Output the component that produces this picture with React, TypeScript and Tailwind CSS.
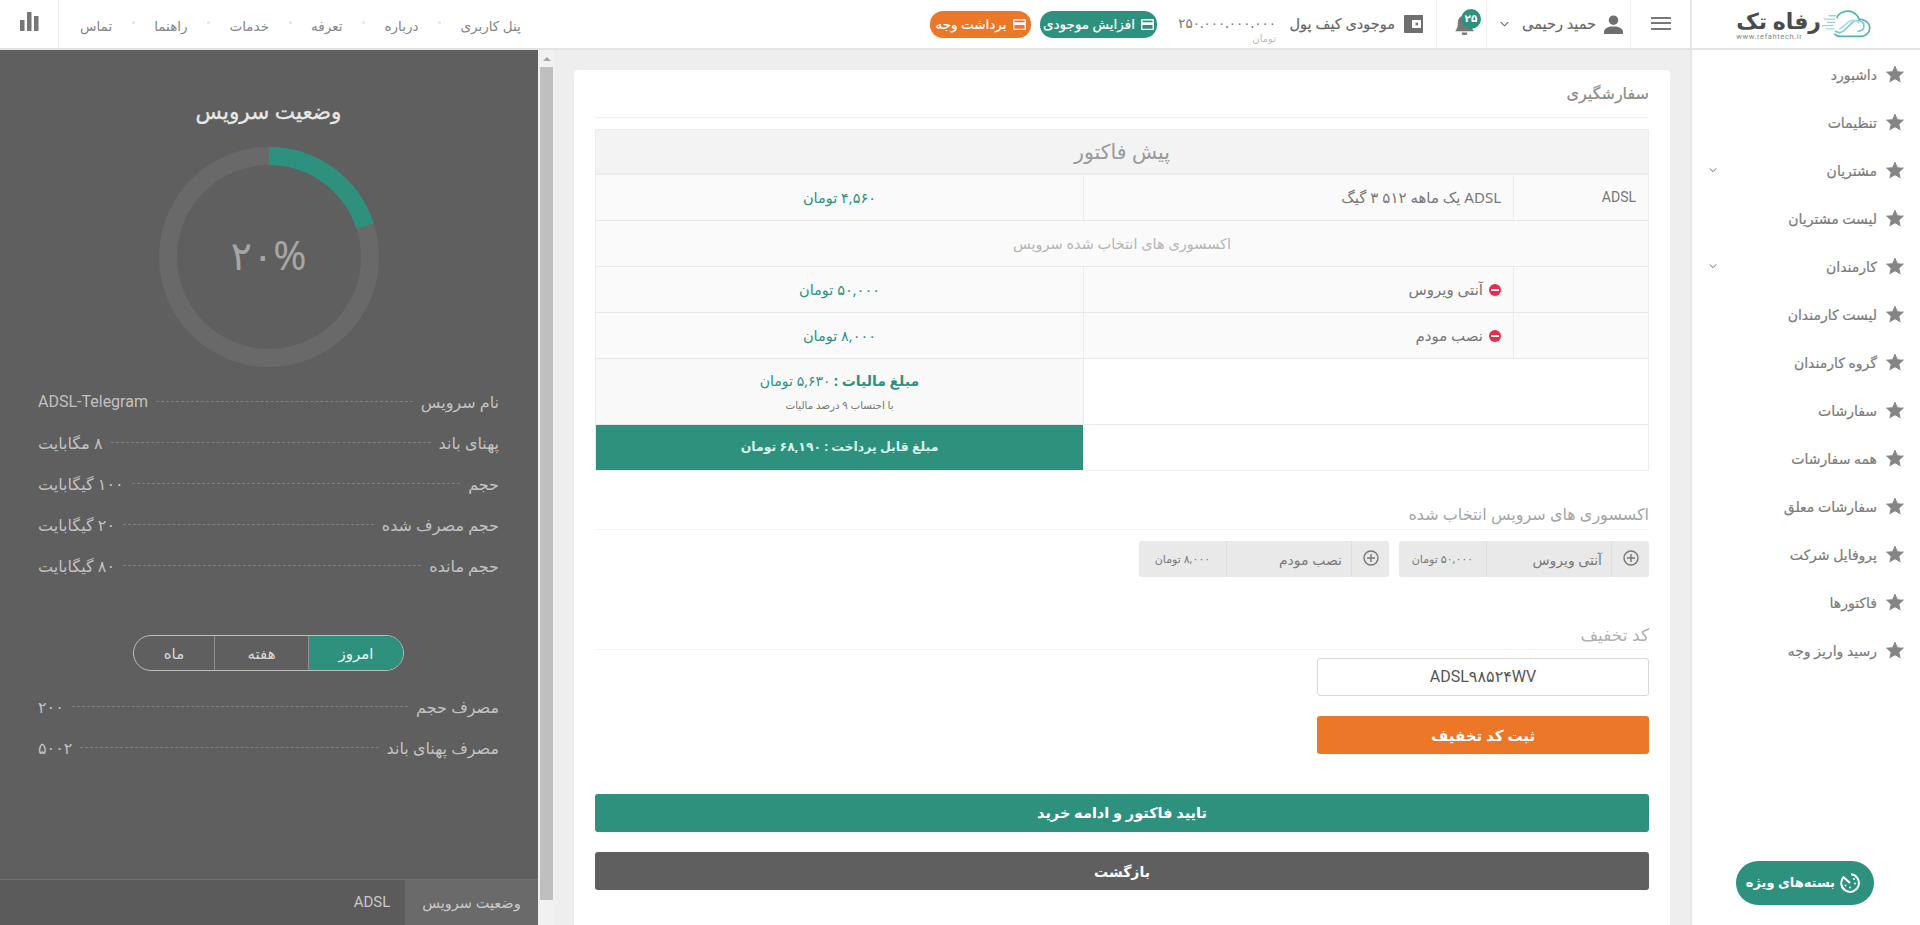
import React from "react";

const Star = () => (
  <svg viewBox="0 0 24 24" className="w-[20px] h-[20px] shrink-0 fill-[#858585]">
    <path d="M12 1.500l3.200 7.100 7.800.8-5.800 5.200 1.700 7.600L12 18.300l-6.900 3.900 1.700-7.600L1 9.400l7.800-.8z" />
  </svg>
);
const Chevron = ({ cls }: { cls: string }) => (
  <svg viewBox="0 0 12 8" className={cls} fill="none" stroke="#666" strokeWidth="1.400">
    <path d="M1 1.500l5 5 5-5" />
  </svg>
);
const Card = () => (
  <svg viewBox="0 0 14 12" className="w-[13px] h-[11px] shrink-0">
    <path fillRule="evenodd" fill="#fff" d="M1 0h12a1 1 0 0 1 1 1v10a1 1 0 0 1-1 1H1a1 1 0 0 1-1-1V1a1 1 0 0 1 1-1zM1.500 1.500v2h11v-2zM1.500 6.500v4h11v-4z" />
  </svg>
);

const Sidebar = () => {
  const items: [string, boolean?][] = [
    ["داشبورد"], ["تنظیمات"], ["مشتریان", true], ["لیست مشتریان"], ["کارمندان", true], ["لیست کارمندان"],
    ["گروه کارمندان"], ["سفارشات"], ["همه سفارشات"], ["سفارشات معلق"], ["پروفایل شرکت"], ["فاکتورها"], ["رسید واریز وجه"],
  ];
  return (
    <aside className="w-[230px] shrink-0 bg-white border-l-2 border-[#e6e6e6] flex flex-col">
      <nav className="flex flex-col">
        {items.map(([t, c]) => (
          <div key={t} className="h-[48px] flex items-center pr-[15px] pl-[17px] text-[14px] text-[#7b7b7b]">
            <Star />
            <span className="mr-[8px] [-webkit-text-stroke:0.2px_#7b7b7b]">{t}</span>
            {c && <Chevron cls="w-[8px] h-[6px] mr-auto" />}
          </div>
        ))}
      </nav>
      <div className="mt-auto mb-[20px] mr-[46px] self-start w-[138px] h-[44px] rounded-[22px] bg-[#2d917d] flex items-center pr-[14px] gap-[5px] text-white text-[13px] font-bold">
        <svg viewBox="0 0 20 20" className="w-[20px] h-[20px] shrink-0" fill="none" stroke="#fff" strokeWidth="2">
          <path d="M11 1.300A8.800 8.800 0 1 1 3.500 4.200L10 10" />
          <path d="M14 6v.1M15 10.500v.1M10 14.500v.1M5.500 12.500v.1" strokeLinecap="round" />
        </svg>
        <span className="whitespace-nowrap">بسته‌های ویژه</span>
      </div>
    </aside>
  );
};

const Logo = () => (
  <div className="w-[230px] shrink-0 h-full border-l-2 border-[#e6e6e6] flex items-center pr-[47px]">
    <svg viewBox="0 0 62 38" className="w-[51px] h-[32px] shrink-0" fill="none" strokeWidth="2">
      <path d="M16 27c4 4 8 3 12-1l8-8c5-6 15-3 15 4 0 3-3 6-8 6" stroke="#7cc9cf" />
      <path d="M18 12c2-7 12-11 20-7 4 2 6 5 7 8 6 0 13 4 13 11 0 6-5 10-11 10H22c-3 0-5-1-7-3" stroke="#53b3ad" />
      <path d="M21 25c4-1 7-6 12-9 5-3 10-1 12 2" stroke="#a8dfe3" />
      <path d="M2 13h14M6 17h10M0 21h14M5 25h10M8 9h9" stroke="#9ad7d4" strokeWidth="1.600" />
    </svg>
    <div className="flex flex-col items-end mr-[1px] mt-[1px]">
      <span className="text-[22px] leading-[25px] font-bold text-[#4b4b4b] whitespace-nowrap">رفاه تک</span>
      <span dir="ltr" className="text-[7.500px] leading-[8px] tracking-[0.600px] text-[#888] font-['Roboto',sans-serif]">www.refahtech.ir</span>
    </div>
  </div>
);

const Header = () => (
  <header className="h-[50px] shrink-0 flex bg-white border-b-2 border-[#e4e4e4] text-[#6a6a6a]">
    <Logo />
    <div className="w-[60px] shrink-0 flex items-center justify-center border-l border-[#f0f0f0]">
      <div className="w-[20px] flex flex-col gap-[3.500px] mb-[2px]">
        <div className="h-[2px] bg-[#777]" /><div className="h-[2px] bg-[#777]" /><div className="h-[2px] bg-[#777]" />
      </div>
    </div>
    <div className="w-[144px] shrink-0 flex items-center border-l border-[#f0f0f0] pr-[7px]">
      <svg viewBox="0 0 20 20" className="w-[19px] h-[19px] shrink-0 fill-[#6e6e6e]">
        <circle cx="10" cy="5.500" r="5" /><path d="M0 20v-2c0-4 4-6 10-6s10 2 10 6v2z" />
      </svg>
      <span className="mr-[8px] w-[75px] text-[14.500px] text-[#666] whitespace-nowrap [-webkit-text-stroke:0.2px_#666]">حمید رحیمی</span>
      <Chevron cls="w-[9px] h-[6px] mr-[12px]" />
    </div>
    <div className="w-[50px] shrink-0 flex items-center justify-center border-l border-[#f0f0f0] relative">
      <svg viewBox="0 0 20 22" className="w-[19px] h-[21px] mt-[1px] ml-[6px] fill-[#777]">
        <path d="M10 0a2 2 0 0 1 2 2c4 1 5 4 5 8 0 4 1 6 3 8H0c2-2 3-4 3-8 0-4 1-7 5-8a2 2 0 0 1 2-2zM7 19.500h6a3 3 0 0 1-6 0z" />
      </svg>
      <span className="absolute top-[9px] left-[24px] w-[20px] h-[20px] rounded-full bg-[#2d917d] text-white text-[10.500px] font-bold flex items-center justify-center">۲۵</span>
    </div>
    <div className="flex items-center pr-[13px] shrink-0">
      <svg viewBox="0 0 19 18" className="w-[19px] h-[18px] shrink-0">
        <path fill="#6f6f6f" fillRule="evenodd" d="M1 0h18v18H1a1 1 0 0 1-1-1V1a1 1 0 0 1 1-1zM8 5v8h9V5zM11.500 7.700h2.500v2.500h-2.500z" />
      </svg>
      <span className="mr-[9px] w-[107px] text-[14.500px] text-[#666] whitespace-nowrap [-webkit-text-stroke:0.2px_#666]">موجودی کیف پول</span>
      <div className="mr-[12px] w-[99px] flex flex-col pt-[9px]">
        <span className="text-[13.500px] leading-[18px] text-right whitespace-nowrap text-[#777]">۲۵۰.۰۰۰.۰۰۰.۰۰۰</span>
        <span className="text-[10px] leading-[12px] text-[#bbb]">تومان</span>
      </div>
      <div className="mr-[20px] w-[117px] h-[27px] rounded-[13px] bg-[#2d917d] text-white flex items-center justify-center gap-[6px] text-[13.500px] whitespace-nowrap [-webkit-text-stroke:0.2px_#fff]">
        <Card /><span>افزایش موجودی</span>
      </div>
      <div className="mr-[9px] w-[101px] h-[27px] rounded-[13px] bg-[#ec7728] text-white flex items-center justify-center gap-[6px] text-[13.500px] whitespace-nowrap [-webkit-text-stroke:0.2px_#fff]">
        <Card /><span>برداشت وجه</span>
      </div>
    </div>
    <nav className="flex-1 flex items-center justify-end text-[13.500px] text-[#858585] pl-[21px]">
      {["پنل کاربری", "درباره", "تعرفه", "خدمات", "راهنما", "تماس"].map((t, i) => (
        <div key={t} className="flex items-center mt-[5px]">
          {i > 0 && <span className="w-[3px] h-[3px] mx-[19.500px] mb-[9px] rounded-full bg-[#e6e6e6]" />}
          <span className="whitespace-nowrap">{t}</span>
        </div>
      ))}
    </nav>
    <div className="w-[59px] shrink-0 flex items-center justify-center border-r border-[#f0f0f0]">
      <svg viewBox="0 0 19 19" className="w-[19px] h-[19px] mb-[5px] fill-[#777]">
        <rect x="14" y="4" width="4.500" height="15" /><rect x="7" y="0" width="4.500" height="19" /><rect x="0" y="8" width="4.500" height="11" />
      </svg>
    </div>
  </header>
);

const Td = ({ cls, children }: { cls: string; children?: React.ReactNode }) => (
  <div className={"flex items-center border-l border-[#ececec] " + cls}>{children}</div>
);
const Minus = () => (
  <span className="w-[12px] h-[12px] rounded-full bg-[#ee2a4a] flex items-center justify-center shrink-0">
    <span className="w-[8px] h-[2px] bg-white" />
  </span>
);

const TableRow = ({ a, b, minus, ltr }: { a: string; b: string; minus?: boolean; ltr?: string }) => (
  <div className="h-[46px] flex border-b border-[#e9e9e9] bg-[#fafafa]">
    <Td cls="w-[135px] shrink-0 pr-[12px] text-[#777]"><span className="font-['Roboto',sans-serif] text-[14px]">{ltr}</span></Td>
    <Td cls="w-[430px] shrink-0 pr-[12px] text-[#777] gap-[6px] text-[15px]">{minus && <Minus />}<span>{b}</span></Td>
    <div className="flex-1 flex items-center justify-center text-[#2d917d] text-[14.500px]">{a}</div>
  </div>
);

const Chip = ({ n, p }: { n: string; p: string }) => (
  <div className="w-[250px] h-[36px] flex rounded-[3px] bg-[#e9e9e9] text-[#7a7a7a]">
    <div className="w-[38px] shrink-0 border-l border-[#dedede] flex items-center justify-center">
      <svg viewBox="0 0 16 16" className="w-[16px] h-[16px] mb-[2px]" fill="none" stroke="#777" strokeWidth="1.400">
        <circle cx="8" cy="8" r="7" /><path d="M8 4v8M4 8h8" />
      </svg>
    </div>
    <div className="w-[125px] shrink-0 border-l border-[#dedede] flex items-center pr-[9px] text-[14px]">{n}</div>
    <div className="flex-1 flex items-center justify-center text-[11px]">{p}</div>
  </div>
);

const Main = () => (
  <main className="flex-1 min-w-0 bg-[#eeeeee] pr-[20px] pl-[19px] pt-[20px] overflow-hidden">
    <div className="bg-white rounded-t-[4px] h-[900px] px-[21px]">
      <div className="h-[48px] border-b border-[#f0f0f0] flex items-center text-[16px] text-[#8a8a8a] pb-[2px] [-webkit-text-stroke:0.2px_#8a8a8a]">سفارشگیری</div>
      <div className="mt-[11px] border border-[#ececec]">
        <div className="h-[45px] bg-[#f3f3f3] border-b-2 border-[#ececec] flex items-center justify-center text-[20.500px] text-[#9a9a9a]">پیش فاکتور</div>
        <TableRow ltr="ADSL" b="ADSL یک ماهه ۵۱۲ ۳ گیگ" a="۴,۵۶۰ تومان" />
        <div className="h-[46px] border-b border-[#e9e9e9] bg-[#fafafa] flex items-center justify-center text-[#b5b5b5] text-[14.500px]">اکسسوری های انتخاب شده سرویس</div>
        <TableRow minus b="آنتی ویروس" a="۵۰,۰۰۰ تومان" />
        <TableRow minus b="نصب مودم" a="۸,۰۰۰ تومان" />
        <div className="h-[66px] flex border-b border-[#e9e9e9]">
          <div className="w-[565px] shrink-0 border-l border-[#e9e9e9]" />
          <div className="flex-1 bg-[#f9f9f9] flex flex-col items-center justify-center text-[#2d917d]">
            <span className="text-[14px] leading-[18px]"><span className="font-bold">مبلغ مالیات :</span> ۵,۶۳۰ تومان</span>
            <span className="text-[10.300px] leading-[14px] mt-[8px] text-[#777]">با احتساب ۹ درصد مالیات</span>
          </div>
        </div>
        <div className="h-[45px] flex">
          <div className="w-[565px] shrink-0" />
          <div className="flex-1 bg-[#2d917d] text-[#d6f4ec] text-[12.500px] font-bold flex items-center justify-center">مبلغ قابل پرداخت : ۶۸,۱۹۰ تومان</div>
        </div>
      </div>

      <div className="mt-[29px] h-[30px] border-b border-[#f3f3f3] text-[16px] text-[#a5a5a5] flex items-center pb-[2px]">اکسسوری های سرویس انتخاب شده</div>
      <div className="mt-[11px] flex gap-[10px]">
        <Chip n="آنتی ویروس" p="۵۰,۰۰۰ تومان" />
        <Chip n="نصب مودم" p="۸,۰۰۰ تومان" />
      </div>

      <div className="mt-[49px] h-[17px] text-[17px] text-[#b0b0b0] flex items-center">کد تخفیف</div>
      <div className="mt-[6px] border-b border-[#f3f3f3]" />
      <div className="mt-[8px] w-[332px] h-[38px] border border-[#d8d8d8] rounded-[3px] flex items-center justify-center text-[#555] text-[16px] font-['Roboto','DejaVu_Sans',sans-serif]">ADSL۹۸۵۲۴WV</div>
      <button className="mt-[20px] block w-[332px] h-[38px] rounded-[3px] bg-[#ec7728] text-white text-[15px] font-bold">ثبت کد تخفیف</button>
      <button className="mt-[40px] block w-full h-[38px] rounded-[3px] bg-[#2d917d] text-white text-[14.500px] font-bold">تایید فاکتور و ادامه خرید</button>
      <button className="mt-[20px] block w-full h-[38px] rounded-[3px] bg-[#5e5f5e] text-white text-[14px] font-bold">بازگشت</button>
    </div>
  </main>
);

const Leader = ({ k, v, ltr }: { k: string; v: string; ltr?: boolean }) => (
  <div className="h-[41px] flex items-center text-[#c2c2c2] text-[16px]">
    <span className="whitespace-nowrap">{k}</span>
    <span className="flex-1 mx-[8px] border-t border-dashed border-[#7f807f]" />
    <span className={"whitespace-nowrap " + (ltr ? "font-['Roboto',sans-serif] text-[16px]" : "")}>{v}</span>
  </div>
);

const Ring = () => {
  const r = 101;
  const c = 2 * Math.PI * r;
  return (
    <div className="relative w-[220px] h-[220px] mx-auto mt-[23px]">
      <svg viewBox="0 0 220 220" className="w-[220px] h-[220px]">
        <circle cx="110" cy="110" r={r} fill="none" stroke="#686968" strokeWidth="18" />
        <circle cx="110" cy="110" r={r} fill="none" stroke="#2d917d" strokeWidth="18" strokeDasharray={`${c * 0.2} ${c}`} transform="rotate(-90 110 110)" />
      </svg>
      <span dir="ltr" className="absolute inset-0 flex items-center justify-center pb-[4px] text-[40px] text-[#a6a6a6]">۲۰%</span>
    </div>
  );
};

const Scrollbar = () => (
  <div className="w-[17px] shrink-0 bg-[#f1f1f1] flex flex-col items-center">
    <div className="h-[17px] flex items-center justify-center">
      <div className="w-0 h-0 border-l-[4px] border-r-[4px] border-b-[4px] border-transparent border-b-[#a3a3a3]" />
    </div>
    <div className="w-[13px] h-[833px] bg-[#bfbfbf]" />
  </div>
);

const Panel = () => (
  <section className="w-[538px] shrink-0 bg-[#5e5f5e] flex flex-col">
    <div className="flex-1 pr-[39px] pl-[38px] pt-[47px]">
      <h2 className="text-center text-[21.500px] leading-[27px] text-[#e8e8e8] [-webkit-text-stroke:0.3px_#e8e8e8]">وضعیت سرویس</h2>
      <Ring />
      <div className="mt-[14px]">
        <Leader k="نام سرویس" v="ADSL-Telegram" ltr />
        <Leader k="پهنای باند" v="۸ مگابایت" />
        <Leader k="حجم" v="۱۰۰ گیگابایت" />
        <Leader k="حجم مصرف شده" v="۲۰ گیگابایت" />
        <Leader k="حجم مانده" v="۸۰ گیگابایت" />
      </div>
      <div className="mt-[49px] mx-auto w-[271px] h-[36px] rounded-full border border-[#bdbdbd] overflow-hidden flex text-[15px] text-[#d8d8d8]">
        <div className="w-[94px] bg-[#2d917d] flex items-center justify-center text-[#e8f5f2]">امروز</div>
        <div className="w-[95px] border-x border-[#8e8e8e] flex items-center justify-center">هفته</div>
        <div className="flex-1 flex items-center justify-center">ماه</div>
      </div>
      <div className="mt-[15px]">
        <Leader k="مصرف حجم" v="۲۰۰" />
        <Leader k="مصرف پهنای باند" v="۵۰۰۲" />
      </div>
    </div>
    <div className="h-[46px] shrink-0 border-t border-[#6e6f6e] bg-[#5a5b5a] flex items-stretch text-[#c9c9c9]">
      <div className="w-[133px] bg-[#696a69] flex items-center justify-center text-[14.500px]">وضعیت سرویس</div>
      <div className="w-[66px] flex items-center justify-center text-[15px] font-['Roboto',sans-serif]">ADSL</div>
    </div>
  </section>
);

export default function App() {
  return (
    <div dir="rtl" className="h-screen w-full flex flex-col overflow-hidden bg-white font-['Noto_Sans','DejaVu_Sans',sans-serif]">
      <Header />
      <div className="flex-1 min-h-0 flex">
        <Sidebar />
        <Main />
        <Scrollbar />
        <Panel />
      </div>
    </div>
  );
}
